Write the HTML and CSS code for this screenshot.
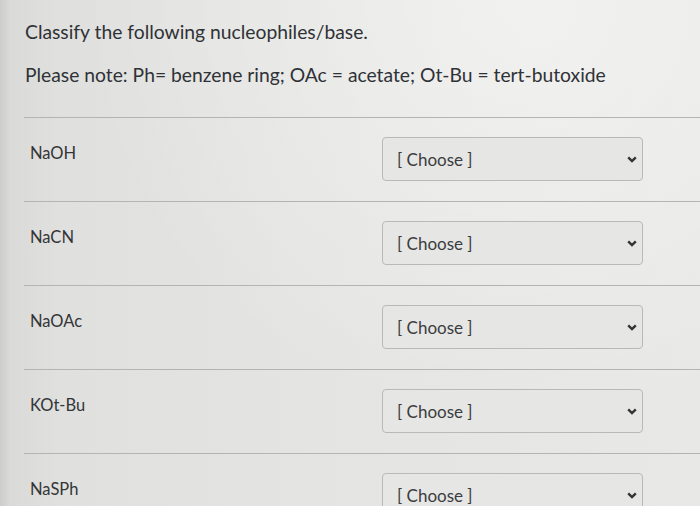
FILE: index.html
```html
<!DOCTYPE html>
<html>
<head>
<meta charset="utf-8">
<link rel="stylesheet" href="styles.css">
</head>
<body>
<div class="page">
  <p class="title">Classify the following nucleophiles/base.</p>
  <p class="note">Please note: Ph= benzene ring; OAc = acetate; Ot-Bu = tert-butoxide</p>
  <div class="rows">
    <div class="row">
      <div class="label">NaOH</div>
      <div class="select"><span>[ Choose ]</span><svg class="chev" viewBox="0 0 10 7" width="10" height="7"><path d="M1.2 1.3 L5 5.1 L8.8 1.3" fill="none" stroke="#333" stroke-width="2.4"/></svg></div>
    </div>
    <div class="row">
      <div class="label">NaCN</div>
      <div class="select"><span>[ Choose ]</span><svg class="chev" viewBox="0 0 10 7" width="10" height="7"><path d="M1.2 1.3 L5 5.1 L8.8 1.3" fill="none" stroke="#333" stroke-width="2.4"/></svg></div>
    </div>
    <div class="row">
      <div class="label">NaOAc</div>
      <div class="select"><span>[ Choose ]</span><svg class="chev" viewBox="0 0 10 7" width="10" height="7"><path d="M1.2 1.3 L5 5.1 L8.8 1.3" fill="none" stroke="#333" stroke-width="2.4"/></svg></div>
    </div>
    <div class="row">
      <div class="label">KOt-Bu</div>
      <div class="select"><span>[ Choose ]</span><svg class="chev" viewBox="0 0 10 7" width="10" height="7"><path d="M1.2 1.3 L5 5.1 L8.8 1.3" fill="none" stroke="#333" stroke-width="2.4"/></svg></div>
    </div>
    <div class="row">
      <div class="label">NaSPh</div>
      <div class="select"><span>[ Choose ]</span><svg class="chev" viewBox="0 0 10 7" width="10" height="7"><path d="M1.2 1.3 L5 5.1 L8.8 1.3" fill="none" stroke="#333" stroke-width="2.4"/></svg></div>
    </div>
  </div>
</div>
</body>
</html>
```
FILE: styles.css
```css
html, body {
  margin: 0;
  height: 100%;
  overflow: hidden;
}
body {
  background: linear-gradient(90deg, #cdcdcb 0px, #dadad8 10px, #e0e0de 60px, #e4e4e2 300px, #e8e8e6 700px);
  font-family: Lato, "Noto Sans", sans-serif;
  color: #2f3236;
}
.page {
  padding: 20px 0 0 25px;
  background: radial-gradient(ellipse at 75% 0%, rgba(255,255,255,0.45), rgba(255,255,255,0) 60%);
  height: 100%;
  box-sizing: border-box;
  overflow: hidden;
}
.title {
  margin: 0;
  font-size: 19.3px;
  line-height: 1.2;
}
.note {
  margin: 20px 0 0;
  font-size: 19.3px;
  line-height: 1.2;
}
.rows {
  margin-top: 31px;
  margin-left: -1px;
}
.row {
  display: flex;
  border-top: 1px solid #b4b4b2;
  height: 83px;
}
.label {
  flex: 0 0 352px;
  padding: 26px 0 0 6px;
  font-size: 16.5px;
  line-height: 19px;
  color: #333538;
}
.select {
  margin-top: 19px;
  width: 261px;
  height: 44px;
  box-sizing: border-box;
  border: 1px solid #b9b9b7;
  border-radius: 4px;
  background: #e6e6e4;
  display: flex;
  align-items: center;
  justify-content: space-between;
  padding: 0 5px 0 14px;
  font-size: 17px;
  color: #3a3c40;
}
.chev {
  display: block;
}
```
